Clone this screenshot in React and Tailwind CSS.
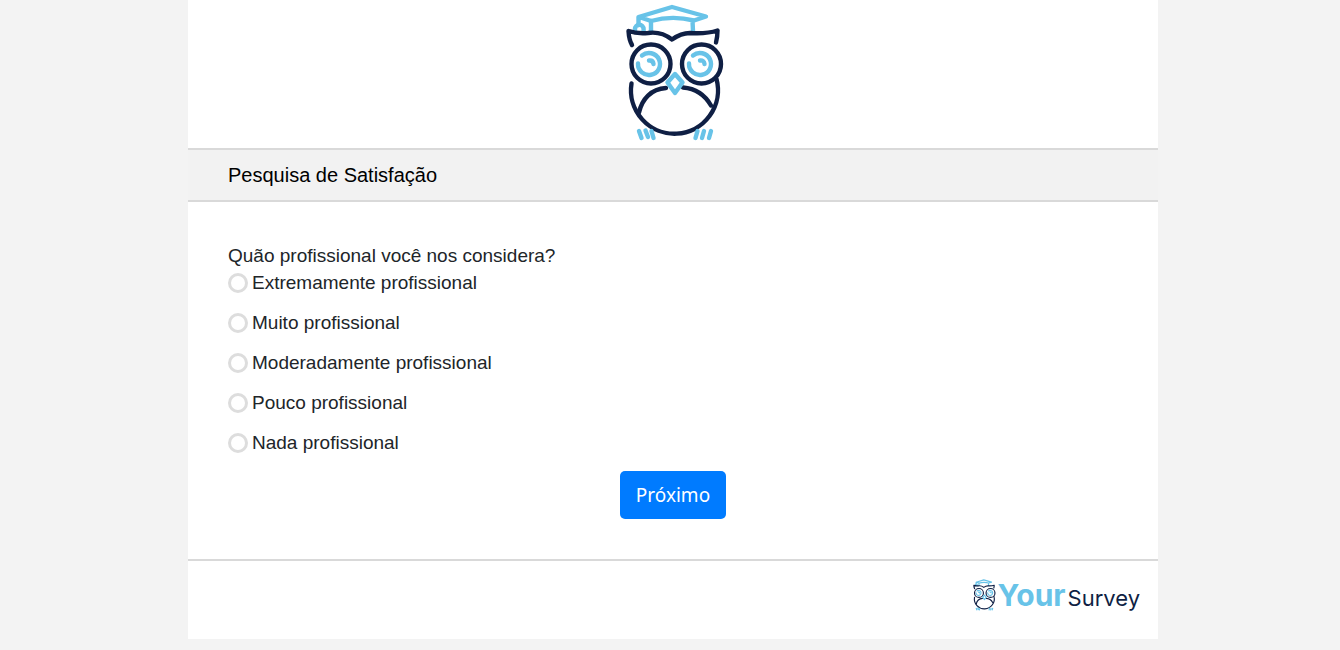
import { useState } from 'react';

const options = [
  'Extremamente profissional',
  'Muito profissional',
  'Moderadamente profissional',
  'Pouco profissional',
  'Nada profissional',
];

function Owl({ className, weight = 4.4 }) {
  return (
    <svg
      viewBox="6 3 104 140"
      className={className}
      fill="none"
      strokeWidth={weight}
      strokeLinecap="round"
      strokeLinejoin="round"
      aria-hidden="true"
    >
      <g stroke="#68c3e8">
        <path d="M23.5 25V17L57 7L91 16.500L79 20.500Q57 15 36 21L24 17M36 21V31M77.500 21L78 31" />
        <path d="M20 32V29A4.300 4.300 0 0 1 28.600 29V32" />
        <path d="M27 55.500A11 11 0 1 1 23 63.500M34 60.500Q38 60 38.500 64" />
        <path d="M78 55.500A11 11 0 1 1 74 63.500M85 60.500Q89 60 89.500 64" />
      </g>
      <g stroke="#0f1f44">
        <path d="M17 45Q14 40 13.500 31Q22 34 33 33Q46 31 57 39.500Q66 33 75 33Q92 34 102.500 30.500Q102.500 37 101 42.500" />
        <circle cx="36" cy="64" r="19.500" />
        <circle cx="86.500" cy="64" r="19.500" />
        <path d="M16.500 83.500A43.500 43.500 0 1 0 101.500 79" />
        <path d="M24 112.500C27 99 36 89 51 88M68 87.500C80 88.500 90 95 96 105.500" />
      </g>
      <g stroke="#68c3e8">
        <path d="M60 74L67.500 82.500L60 93L52.500 82.500Z" fill="#fff" />
        <path d="M24 131L26.500 138M30.500 130.500L33 137M36.500 131L38.500 138M82.500 131L80.500 138M89 131L87 138M96 131L94 138" />
      </g>
    </svg>
  );
}

export default function App() {
  const [answer, setAnswer] = useState('');
  return (
    <div className="min-h-screen bg-[#f3f3f3] pb-[11px] pl-1.5 font-['Liberation_Sans',Arial,sans-serif] text-[#212529]">
      <div className="mx-auto max-w-[970px] bg-white">
        <header className="flex h-[148px] justify-center pt-[3px]">
          <Owl className="h-[140px] w-[104px]" />
        </header>
        <h1 className="border-y-2 border-[#d9d9d9] bg-[#f2f2f2] px-10 py-2.5 text-[20px] leading-[30px] text-black">
          Pesquisa de Satisfação
        </h1>
        <form className="px-10 py-10" onSubmit={(e) => e.preventDefault()}>
          <fieldset>
            <legend className="text-[19px] leading-[27px]">Quão profissional você nos considera?</legend>
            <div className="flex flex-col gap-3">
              {options.map((option) => (
                <label key={option} className="flex items-center gap-1 self-start text-[19px] leading-[28px]">
                  <input
                    type="radio"
                    name="answer"
                    value={option}
                    checked={answer === option}
                    onChange={() => setAnswer(option)}
                    className="size-5 appearance-none rounded-full border-3 border-[#ddd] bg-white checked:border-[#007bff]"
                  />
                  {option}
                </label>
              ))}
            </div>
          </fieldset>
          <div className="flex justify-center pt-3.5">
            <button
              type="submit"
              className="rounded-[5px] bg-[#007bff] px-4 py-[9px] font-['Noto_Sans','Open_Sans',sans-serif] text-[19px] leading-[30px] text-white"
            >
              Próximo
            </button>
          </div>
        </form>
        <footer className="flex h-20 items-start justify-end border-t-2 border-[#d9d9d9] pt-4 pr-[18px]">
          <a href="#inicio" className="flex items-start gap-0.5 font-['Inter',sans-serif]">
            <Owl className="mt-0.5 h-8 w-6" weight={5} />
            <span className="flex items-baseline gap-0.5 leading-9">
              <span className="text-[30px] font-bold text-[#68c3e8]">Your</span>
              <span className="text-[22px] text-[#0f1f44]">Survey</span>
            </span>
          </a>
        </footer>
      </div>
    </div>
  );
}
